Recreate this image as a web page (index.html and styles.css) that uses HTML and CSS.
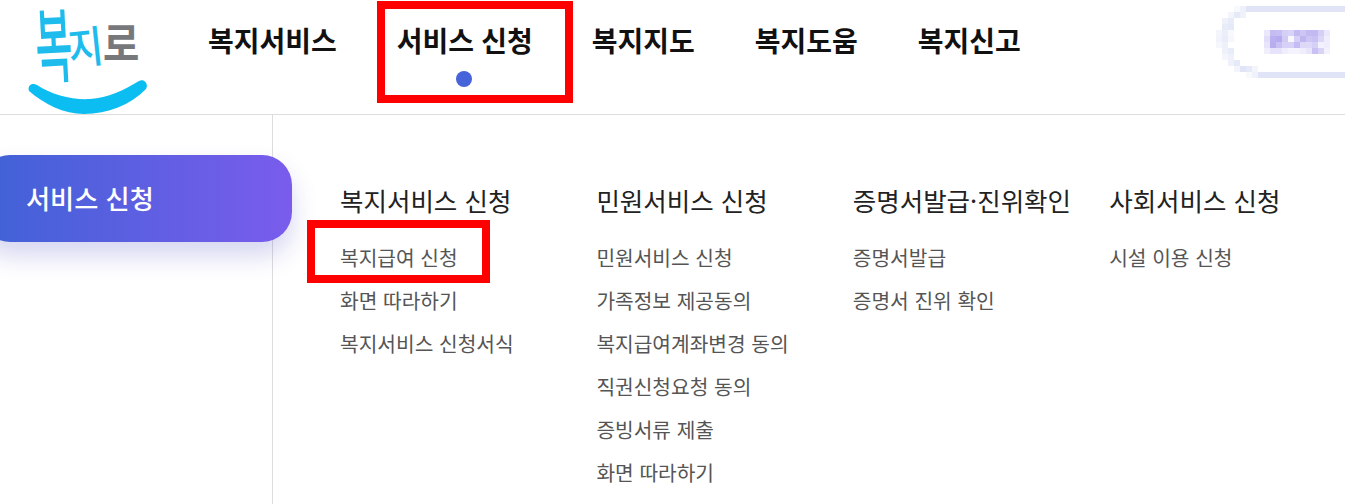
FILE: index.html
```html
<!DOCTYPE html>
<html lang="ko">
<head>
    <meta charset="UTF-8">
    <title>복지로</title>
    <link rel="stylesheet" href="styles.css">
</head>
<body>
    <header class="header">
        <a class="logo" href="#">
            <svg width="148" height="114" viewBox="0 0 148 114">
                <text class="logo-text logo-blue" transform="translate(37 77) rotate(-3) scale(1.06 2.15)" font-size="38">복</text>
                <text class="logo-text logo-blue" transform="translate(70 65) rotate(-6) scale(1 1.15)" font-size="38">지</text>
                <text class="logo-text logo-gray" transform="translate(103 61) scale(1.04 1.2)" font-size="38">로</text>
                <path class="logo-smile" d="M29 91C27 86 32 82 37 85C52 95 72 100 90 99C108 98 124 90 139 81C144 78 149 84 146 89C130 105 108 114 84 114C64 114 44 104 29 91Z"/>
            </svg>
        </a>
        <nav class="gnb">
            <a href="#">복지서비스</a>
            <a href="#" class="active">서비스 신청<span class="mark mark-nav"></span></a>
            <a href="#">복지지도</a>
            <a href="#">복지도움</a>
            <a href="#">복지신고</a>
        </nav>
        <svg class="search" width="129" height="84" viewBox="1216 0 129 84" shape-rendering="crispEdges">
            <rect x="1246" y="6" width="99" height="6" fill="#e0e4f6"/>
            <rect x="1258" y="72" width="87" height="6" fill="#e0e4f6"/>
            <rect x="1234" y="6" width="6" height="6" fill="#f8f9fd"/>
            <rect x="1240" y="6" width="6" height="6" fill="#eef0fa"/>
            <rect x="1228" y="12" width="6" height="6" fill="#f3f5fb"/>
            <rect x="1234" y="12" width="6" height="6" fill="#e6e9f8"/>
            <rect x="1240" y="12" width="6" height="6" fill="#f0f2fb"/>
            <rect x="1222" y="18" width="6" height="6" fill="#eef0fa"/>
            <rect x="1228" y="18" width="6" height="6" fill="#e8ebf8"/>
            <rect x="1222" y="24" width="6" height="6" fill="#e8ebf8"/>
            <rect x="1228" y="24" width="6" height="6" fill="#e6e9f8"/>
            <rect x="1216" y="30" width="6" height="6" fill="#f4f5fb"/>
            <rect x="1222" y="30" width="6" height="6" fill="#eceffa"/>
            <rect x="1228" y="30" width="6" height="6" fill="#f8f9fd"/>
            <rect x="1216" y="36" width="6" height="6" fill="#f3f4fb"/>
            <rect x="1222" y="36" width="6" height="6" fill="#e9ecf9"/>
            <rect x="1228" y="36" width="6" height="6" fill="#f6f7fd"/>
            <rect x="1216" y="42" width="6" height="6" fill="#f6f7fd"/>
            <rect x="1222" y="42" width="6" height="6" fill="#eef0fa"/>
            <rect x="1222" y="48" width="6" height="6" fill="#eef0fa"/>
            <rect x="1228" y="48" width="6" height="6" fill="#e8ebf8"/>
            <rect x="1222" y="54" width="6" height="6" fill="#f5f6fb"/>
            <rect x="1228" y="54" width="6" height="6" fill="#eef0fa"/>
            <rect x="1228" y="60" width="6" height="6" fill="#eef0fa"/>
            <rect x="1234" y="60" width="6" height="6" fill="#e6e9f8"/>
            <rect x="1234" y="66" width="6" height="6" fill="#f3f5fb"/>
            <rect x="1240" y="66" width="6" height="6" fill="#e0e4f6"/>
            <rect x="1246" y="66" width="6" height="6" fill="#e6e9f8"/>
            <rect x="1252" y="66" width="6" height="6" fill="#f3f5fb"/>
            <rect x="1246" y="72" width="6" height="6" fill="#f8f9fd"/>
            <rect x="1252" y="72" width="6" height="6" fill="#f0f2fb"/>

            <rect x="1264" y="30" width="6" height="6" fill="#ebe8fb"/>
            <rect x="1270" y="30" width="6" height="6" fill="#c4bdf2"/>
            <rect x="1276" y="30" width="6" height="6" fill="#c6bff3"/>
            <rect x="1282" y="30" width="6" height="6" fill="#d4cff6"/>
            <rect x="1288" y="30" width="6" height="6" fill="#d8d4f8"/>
            <rect x="1294" y="30" width="6" height="6" fill="#c2baf1"/>
            <rect x="1300" y="30" width="6" height="6" fill="#cdc6f4"/>
            <rect x="1306" y="30" width="6" height="6" fill="#c2baf1"/>
            <rect x="1312" y="30" width="6" height="6" fill="#c2baf1"/>
            <rect x="1318" y="30" width="6" height="6" fill="#d4cff7"/>
            <rect x="1324" y="30" width="6" height="6" fill="#ebe8fb"/>
            <rect x="1264" y="36" width="6" height="6" fill="#e2defa"/>
            <rect x="1270" y="36" width="6" height="6" fill="#b9b0ef"/>
            <rect x="1276" y="36" width="6" height="6" fill="#b5abee"/>
            <rect x="1282" y="36" width="6" height="6" fill="#d0caf5"/>
            <rect x="1288" y="36" width="6" height="6" fill="#f8f7fe"/>
            <rect x="1294" y="36" width="6" height="6" fill="#d5d0f6"/>
            <rect x="1300" y="36" width="6" height="6" fill="#bfb6f0"/>
            <rect x="1306" y="36" width="6" height="6" fill="#cdc6f4"/>
            <rect x="1312" y="36" width="6" height="6" fill="#c8c1f3"/>
            <rect x="1318" y="36" width="6" height="6" fill="#dbd7f8"/>
            <rect x="1324" y="36" width="6" height="6" fill="#f0eefc"/>
            <rect x="1264" y="42" width="6" height="6" fill="#e8e5fb"/>
            <rect x="1270" y="42" width="6" height="6" fill="#b8aeee"/>
            <rect x="1276" y="42" width="6" height="6" fill="#c8c1f3"/>
            <rect x="1282" y="42" width="6" height="6" fill="#d6d2f7"/>
            <rect x="1288" y="42" width="6" height="6" fill="#d6d2f7"/>
            <rect x="1294" y="42" width="6" height="6" fill="#c4bcf2"/>
            <rect x="1300" y="42" width="6" height="6" fill="#dcd8f8"/>
            <rect x="1306" y="42" width="6" height="6" fill="#ddd9f8"/>
            <rect x="1312" y="42" width="6" height="6" fill="#d5d0f6"/>
            <rect x="1318" y="42" width="6" height="6" fill="#f3f1fd"/>
            <rect x="1324" y="42" width="6" height="6" fill="#f0eefc"/>
            <rect x="1264" y="48" width="6" height="6" fill="#f1effc"/>
            <rect x="1270" y="48" width="6" height="6" fill="#e6e3fa"/>
            <rect x="1276" y="48" width="6" height="6" fill="#e6e3fa"/>
            <rect x="1282" y="48" width="6" height="6" fill="#f0eefc"/>
            <rect x="1288" y="48" width="6" height="6" fill="#f5f3fd"/>
            <rect x="1294" y="48" width="6" height="6" fill="#f5f3fd"/>
            <rect x="1300" y="48" width="6" height="6" fill="#f0eefc"/>
            <rect x="1306" y="48" width="6" height="6" fill="#e8e5fb"/>
            <rect x="1312" y="48" width="6" height="6" fill="#c8c1f3"/>
            <rect x="1318" y="48" width="6" height="6" fill="#d8d4f8"/>
            <rect x="1324" y="48" width="6" height="6" fill="#f3f1fd"/>
        </svg>
    </header>

    <div class="content">
        <aside class="side">
            <a href="#" class="side-title">서비스 신청</a>
        </aside>
        <main class="menu">
            <section class="menu-col">
                <h2>복지서비스 신청</h2>
                <ul>
                    <li><a href="#">복지급여 신청</a><span class="mark mark-item"></span></li>
                    <li><a href="#">화면 따라하기</a></li>
                    <li><a href="#">복지서비스 신청서식</a></li>
                </ul>
            </section>
            <section class="menu-col">
                <h2>민원서비스 신청</h2>
                <ul>
                    <li><a href="#">민원서비스 신청</a></li>
                    <li><a href="#">가족정보 제공동의</a></li>
                    <li><a href="#">복지급여계좌변경 동의</a></li>
                    <li><a href="#">직권신청요청 동의</a></li>
                    <li><a href="#">증빙서류 제출</a></li>
                    <li><a href="#">화면 따라하기</a></li>
                </ul>
            </section>
            <section class="menu-col">
                <h2>증명서발급·진위확인</h2>
                <ul>
                    <li><a href="#">증명서발급</a></li>
                    <li><a href="#">증명서 진위 확인</a></li>
                </ul>
            </section>
            <section class="menu-col">
                <h2>사회서비스 신청</h2>
                <ul>
                    <li><a href="#">시설 이용 신청</a></li>
                </ul>
            </section>
        </main>
    </div>
</body>
</html>
```

FILE: styles.css
```css
html, body { margin: 0; padding: 0; }
body { width: 1345px; height: 504px; overflow: hidden; background: #fff; font-family: "Noto Sans CJK KR", "Noto Sans", sans-serif; }
a { color: inherit; text-decoration: none; }

.header { display: flex; height: 114px; border-bottom: 1px solid #ddd; }
.logo { display: block; width: 148px; height: 114px; }
.logo svg { display: block; }
.logo-text { font-family: "Noto Sans CJK KR", sans-serif; font-weight: 500; }
.logo-blue { fill: #1dbcec; }
.logo-gray { fill: #77787c; font-weight: 700; }
.logo-smile { fill: #0cbdf1; }

.gnb { display: flex; gap: 60px; margin-left: 60px; }
.gnb a { position: relative; height: 80px; line-height: 80px; font-size: 28px; font-weight: 700; color: #111; white-space: nowrap; }
.gnb a.active { margin-right: -1px; word-spacing: -0.8px; }
.gnb a.active::after { content: ""; position: absolute; left: 59px; top: 71px; width: 16px; height: 16px; border-radius: 50%; background: #4763d9; }

.mark { position: absolute; border: 8px solid #f00; box-sizing: border-box; }
.mark-nav { left: -20px; top: 1px; width: 196px; height: 102px; }
.mark-item { left: -33px; top: -16px; width: 183px; height: 63px; }

.search { margin-left: auto; flex: none; }

.content { display: flex; height: 389px; }
.side { flex: none; width: 272px; border-right: 1px solid #ddd; }
.side-title { display: block; box-sizing: border-box; width: 312px; height: 87px; margin: 40px 0 0 -20px; padding: 0 0 1px 46px; line-height: 86px; font-size: 26.2px; font-weight: 500; color: #fff; border-radius: 30px; background: linear-gradient(90deg, #3f62d6, #7a5cec); box-shadow: 0 14px 24px rgba(70, 70, 190, 0.22); }

.menu { display: grid; grid-template-columns: repeat(4, 256.4px); padding-left: 67px; }
.menu-col h2 { margin: 65px 0 0; height: 40px; line-height: 40px; font-size: 25.5px; font-weight: 400; color: #222; white-space: nowrap; }
.menu-col ul { list-style: none; margin: 16px 0 0; padding: 0; }
.menu-col li { position: relative; height: 43px; line-height: 43px; font-size: 20.3px; color: #555; white-space: nowrap; }
```
